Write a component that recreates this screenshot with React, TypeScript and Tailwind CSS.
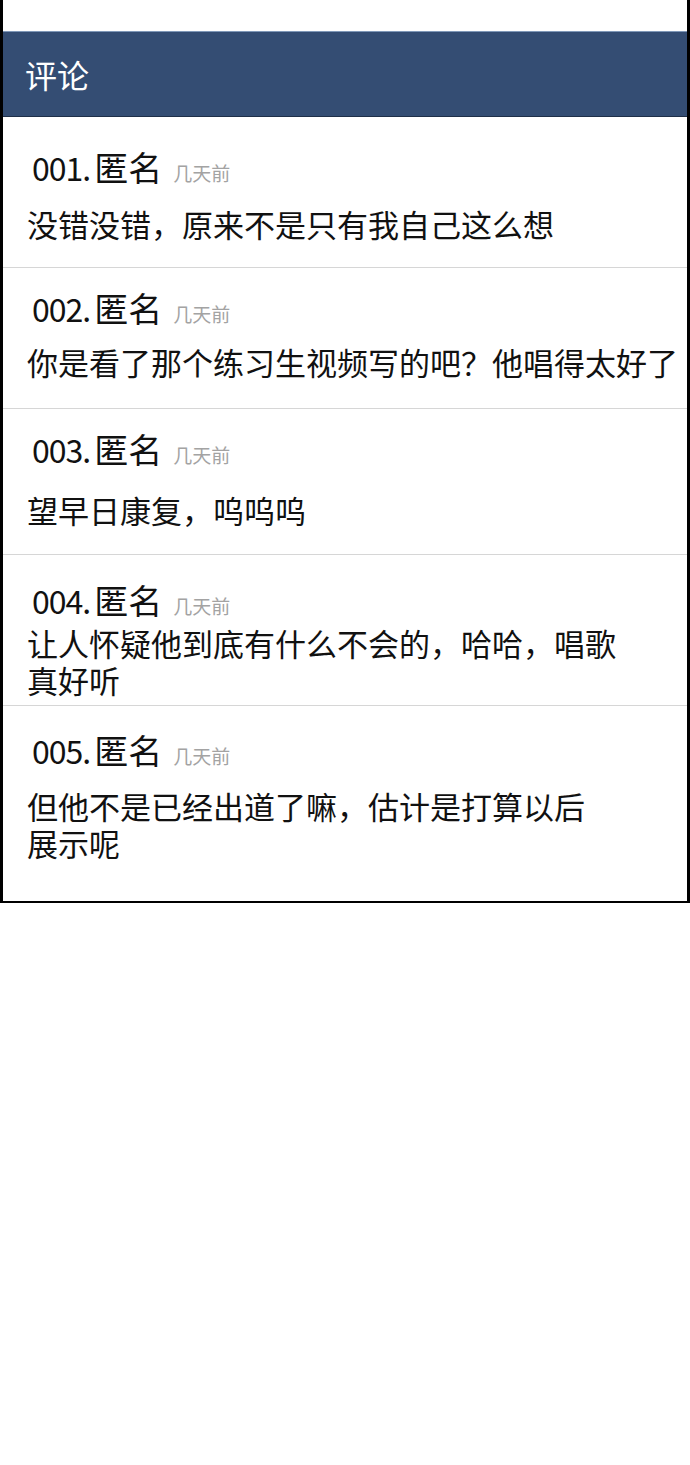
import React from 'react';

interface Comment {
  no: string;
  lines: string[];
  pad: string;
  gap: string;
}

const comments: Comment[] = [
  { no: '001.', lines: ['没错没错，原来不是只有我自己这么想'], pad: 'pt-[30px] pb-[25px]', gap: 'mt-[18px]' },
  { no: '002.', lines: ['你是看了那个练习生视频写的吧？他唱得太好了'], pad: 'pt-[20px] pb-[28px]', gap: 'mt-[15px]' },
  { no: '003.', lines: ['望早日康复，呜呜呜'], pad: 'pt-[20px] pb-[26px]', gap: 'mt-[22px]' },
  { no: '004.', lines: ['让人怀疑他到底有什么不会的，哈哈，唱歌', '真好听'], pad: 'pt-[25px] pb-[7px]', gap: 'mt-[4px]' },
  { no: '005.', lines: ['但他不是已经出道了嘛，估计是打算以后', '展示呢'], pad: 'pt-[24px] pb-[40px]', gap: 'mt-[17px]' },
];

const font = { fontFamily: '"Noto Sans CJK SC", "Noto Sans", sans-serif' };

const CommentRow: React.FC<{ c: Comment; last: boolean }> = ({ c, last }) => (
  <div className={`${c.pad} ${last ? '' : 'border-b border-[#d6d6d6]'}`}>
    <div className="flex items-baseline pl-[29px] h-[40px] leading-[40px]">
      <span className="text-[32px] text-[#111] tracking-[-1px]">{c.no}</span>
      <span className="text-[34px] text-[#111] ml-[4px]">匿名</span>
      <span className="text-[19px] text-[#a3a3a3] ml-[11px]">几天前</span>
    </div>
    <div className={`${c.gap} pl-[24px] text-[31px] leading-[37px] text-[#111]`}>
      {c.lines.map((l, i) => (
        <div key={i} className="whitespace-nowrap">{l}</div>
      ))}
    </div>
  </div>
);

export default function App() {
  return (
    <div className="w-[690px] bg-white" style={font}>
      <div className="border-l-[3px] border-r-[3px] border-b-2 border-black">
        <div className="h-[31px] bg-white" />
        <div className="h-[86px] bg-[#344d73] border-t border-[#7f98b8] border-b border-b-[#1f2f48] flex items-center pl-[22px]">
          <span className="text-[32px] text-white leading-none">评论</span>
        </div>
        {comments.map((c, i) => (
          <CommentRow key={c.no} c={c} last={i === comments.length - 1} />
        ))}
      </div>
    </div>
  );
}
